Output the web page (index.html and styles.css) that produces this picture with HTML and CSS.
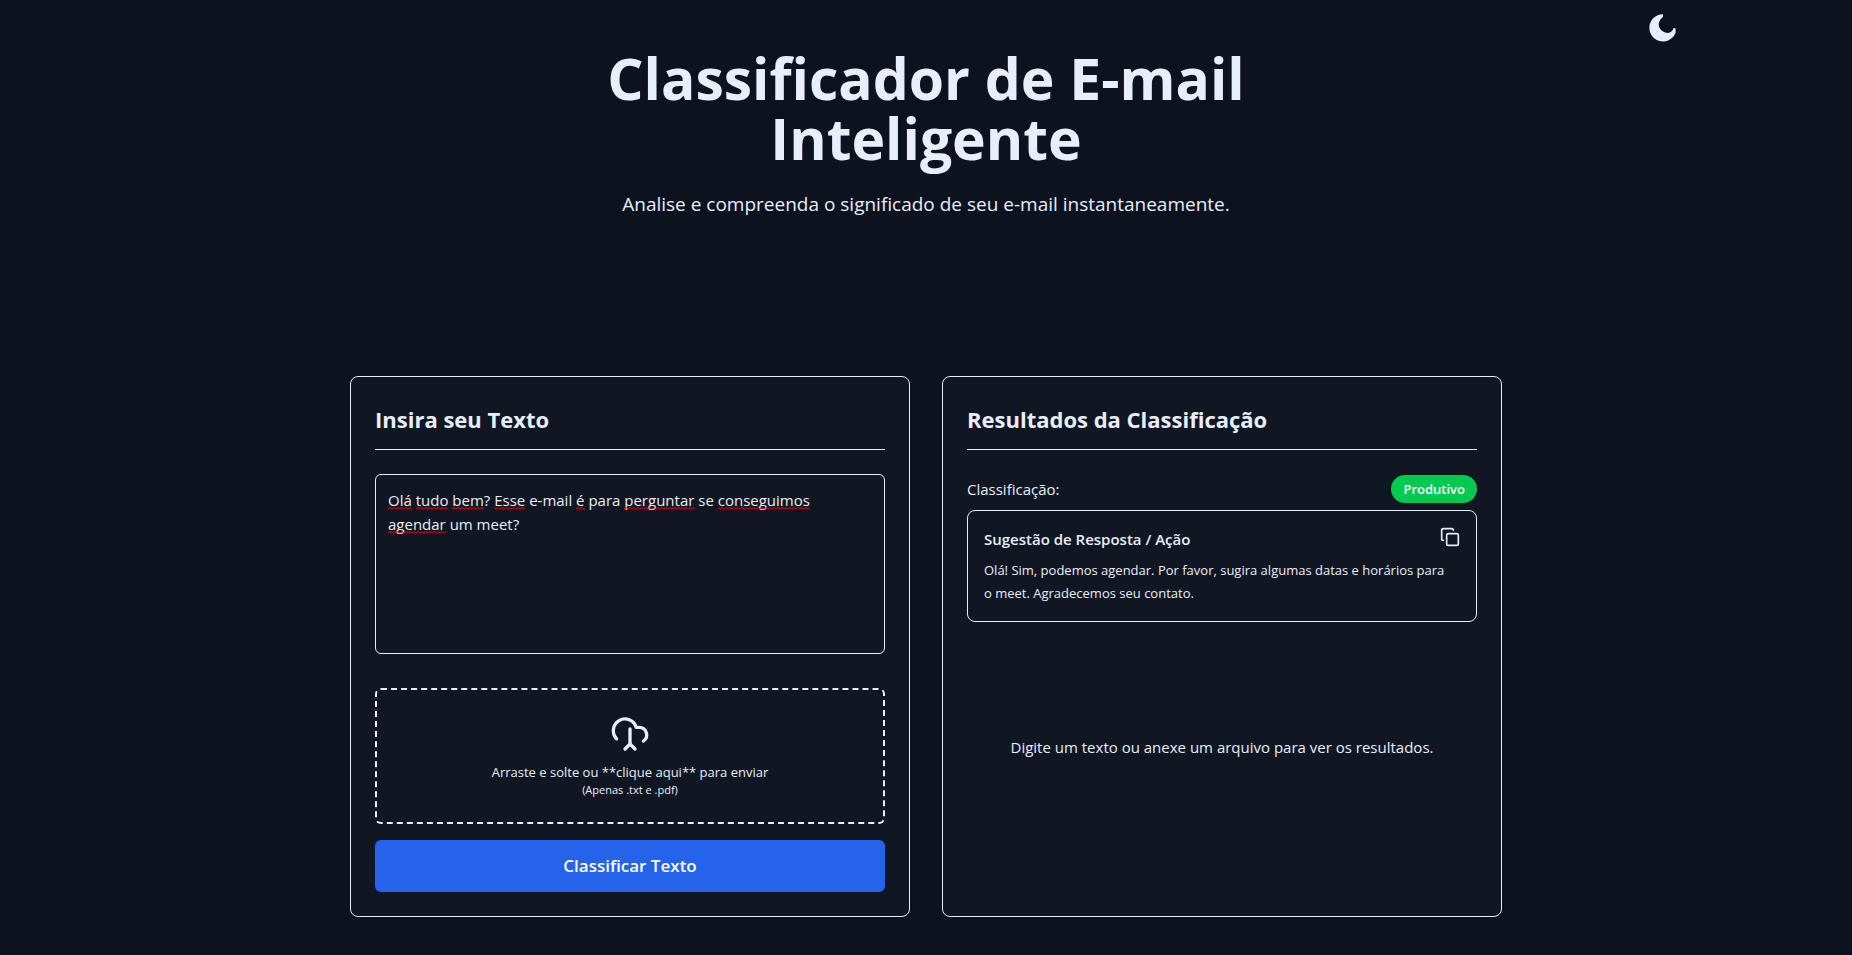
FILE: index.html
```html
<!DOCTYPE html>
<html lang="pt-BR">
<head>
<meta charset="utf-8">
<meta name="viewport" content="width=device-width, initial-scale=1">
<title>Classificador de E-mail Inteligente</title>
<link rel="stylesheet" href="styles.css">
</head>
<body>
<button class="theme-toggle" type="button" aria-label="Alternar tema">
  <svg class="theme-icon" viewBox="0 0 32 32" aria-hidden="true">
    <path fill="currentColor" d="M17 2.200A13.600 13.600 0 1 0 29.600 20.800V17Q29.400 16 28.200 16.100Q27 16.300 26.800 18A8 8 0 0 1 23 20.800A9 9 0 0 1 12.700 11.500A8.800 8.800 0 0 1 15.700 6Q17 5.200 17 4.200Z"/>
  </svg>
</button>
<header class="hero">
  <h1 class="hero-title">Classificador de E-mail Inteligente</h1>
  <p class="hero-subtitle">Analise e compreenda o significado de seu e-mail instantaneamente.</p>
</header>
<main class="panels">
  <form class="card">
    <h2 class="card-title"><label for="email-text">Insira seu Texto</label></h2>
    <div class="editor">
      <textarea class="editor-input" id="email-text" spellcheck="false">Olá tudo bem? Esse e-mail é para perguntar se conseguimos agendar um meet?</textarea>
      <svg class="editor-marks" aria-hidden="true">
        <defs>
          <pattern id="wave" y="20" width="4" height="3" patternUnits="userSpaceOnUse">
            <path d="M-1 3L2 .500L5 3" fill="none" stroke="#f00" stroke-width="1"/>
          </pattern>
          <pattern id="wave-2" y="44" width="4" height="3" patternUnits="userSpaceOnUse">
            <path d="M-1 3L2 .500L5 3" fill="none" stroke="#f00" stroke-width="1"/>
          </pattern>
        </defs>
        <g fill="url(#wave)">
          <rect x="0" y="20" width="24" height="3"/>
          <rect x="28" y="20" width="32" height="3"/>
          <rect x="64" y="20" width="32" height="3"/>
          <rect x="106" y="20" width="31" height="3"/>
          <rect x="188" y="20" width="9" height="3"/>
          <rect x="236" y="20" width="71" height="3"/>
          <rect x="330" y="20" width="92" height="3"/>
        </g>
        <rect fill="url(#wave-2)" x="0" y="44" width="58" height="3"/>
      </svg>
    </div>
    <label class="dropzone">
      <input class="dropzone-input" type="file" accept=".txt,.pdf">
      <svg class="dropzone-icon" viewBox="0 0 24 24" fill="none" stroke="currentColor" stroke-width="2" stroke-linecap="round" stroke-linejoin="round" aria-hidden="true">
        <path d="M4 14.899A7 7 0 1 1 15.710 8h1.790a4.500 4.500 0 0 1 2.500 8.242"/>
        <path d="M12 9v9"/>
        <path d="m9 21 3-3 3 3"/>
      </svg>
      <span class="dropzone-text">Arraste e solte ou **clique aqui** para enviar</span>
      <span class="dropzone-hint">(Apenas .txt e .pdf)</span>
    </label>
    <button class="submit" type="submit">Classificar Texto</button>
  </form>
  <section class="card">
    <h2 class="card-title">Resultados da Classificação</h2>
    <div class="result-row">
      <span class="result-label">Classificação:</span>
      <span class="badge">Produtivo</span>
    </div>
    <article class="suggestion">
      <div class="suggestion-head">
        <h3 class="suggestion-title">Sugestão de Resposta / Ação</h3>
        <button class="copy" type="button" aria-label="Copiar resposta">
          <svg class="copy-icon" viewBox="0 0 24 24" fill="none" stroke="currentColor" stroke-width="2" stroke-linecap="round" stroke-linejoin="round" aria-hidden="true">
            <rect x="8" y="8" width="14" height="14" rx="2"/>
            <path d="M4 16c-1.100 0-2-.900-2-2V4c0-1.100.900-2 2-2h10c1.100 0 2 .900 2 2"/>
          </svg>
        </button>
      </div>
      <p class="suggestion-text">Olá! Sim, podemos agendar. Por favor, sugira algumas datas e horários para o meet. Agradecemos seu contato.</p>
    </article>
    <p class="empty">Digite um texto ou anexe um arquivo para ver os resultados.</p>
  </section>
</main>
</body>
</html>
```
FILE: styles.css
```css
*, *::before, *::after { box-sizing: border-box; }

:root {
  --bg: #0c121e;
  --panel: #101622;
  --line: #e8eefa;
  --text: #e8eefa;
  --primary: #2563eb;
  --success: #00c950;
}

body {
  margin: 0;
  min-height: 100vh;
  background: var(--bg);
  color: var(--text);
  font-family: "Open Sans", "Noto Sans", sans-serif;
  font-size: 15px;
  line-height: 24px;
}

h1, h2, h3, p { margin: 0; }

button, textarea { font: inherit; color: inherit; }

.theme-toggle {
  position: absolute;
  top: 12px;
  right: 174px;
  padding: 0;
  border: 0;
  background: none;
  cursor: pointer;
}

.theme-icon { display: block; width: 32px; height: 32px; }

.hero {
  max-width: 768px;
  margin: 0 auto;
  padding: 48px 32px 156px;
  text-align: center;
}

.hero-title {
  margin-bottom: 20px;
  font-size: 57px;
  font-weight: 700;
  line-height: 60px;
}

.hero-subtitle { font-size: 19px; line-height: 32px; }

.panels {
  display: grid;
  grid-template-columns: repeat(auto-fit, minmax(min(100%, 400px), 1fr));
  gap: 32px;
  max-width: 1216px;
  margin: 0 auto;
  padding: 0 32px 32px;
}

.card {
  display: flex;
  flex-direction: column;
  min-width: 0;
  padding: 24px;
  border: 1px solid var(--line);
  border-radius: 8px;
  background: var(--panel);
}

.card-title {
  margin-bottom: 24px;
  padding: 2px 0 14px;
  border-bottom: 1px solid var(--line);
  font-size: 22px;
  font-weight: 700;
  line-height: 32px;
}

.editor { position: relative; margin-bottom: 34px; }

.editor-input {
  display: block;
  width: 100%;
  height: 180px;
  padding: 13px 16px 12px 12px;
  border: 1px solid var(--line);
  border-radius: 6px;
  outline: 0;
  background: transparent;
  resize: none;
}

.editor-marks {
  position: absolute;
  inset: 13px;
  width: calc(100% - 26px);
  height: 48px;
  pointer-events: none;
}

.dropzone {
  display: flex;
  flex-direction: column;
  align-items: center;
  margin-bottom: 16px;
  padding: 24px;
  border: 2px dashed var(--line);
  border-radius: 6px;
  text-align: center;
  cursor: pointer;
}

.dropzone-input { position: absolute; width: 1px; height: 1px; opacity: 0; }
.dropzone-icon { width: 40px; height: 40px; margin-bottom: 8px; }
.dropzone-text { font-size: 13px; line-height: 20px; }
.dropzone-hint { font-size: 11px; line-height: 16px; }

.submit {
  padding: 12px 16px;
  border: 0;
  border-radius: 6px;
  background: var(--primary);
  color: #fff;
  font-size: 17px;
  font-weight: 600;
  line-height: 28px;
  cursor: pointer;
}

.result-row {
  display: flex;
  align-items: center;
  justify-content: space-between;
  padding: 1px 0 7px;
}

.badge {
  padding: 4px 12px;
  border-radius: 14px;
  background: var(--success);
  color: #fff;
  font-size: 13px;
  font-weight: 600;
  line-height: 20px;
}

.suggestion {
  padding: 16px;
  border: 1px solid var(--line);
  border-radius: 8px;
}

.suggestion-head {
  display: flex;
  align-items: flex-start;
  justify-content: space-between;
  margin-bottom: 8px;
}

.suggestion-title { font-size: 15px; font-weight: 600; line-height: 24px; }

.copy { padding: 0; border: 0; background: none; cursor: pointer; }
.copy-icon { display: block; width: 20px; height: 20px; }

.suggestion-text { padding-right: 8px; font-size: 13px; line-height: 23px; }

.empty {
  display: grid;
  flex: 1;
  place-items: center;
  padding-bottom: 20px;
  text-align: center;
}
```
